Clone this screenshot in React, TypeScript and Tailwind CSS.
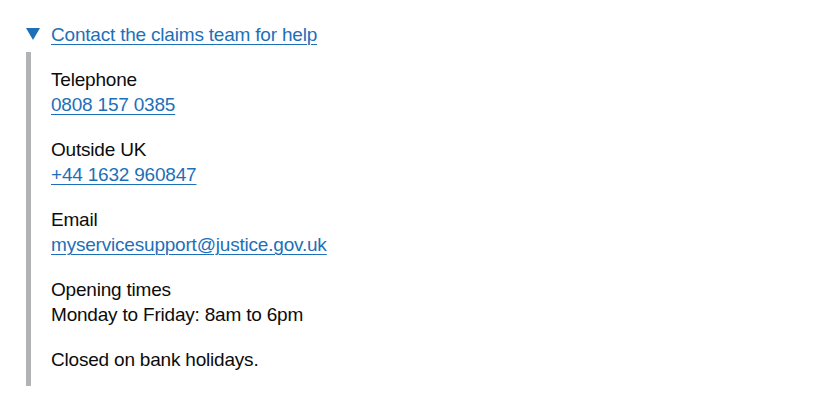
const contactItems: { label: string; value: string; href?: string }[] = [
  { label: "Telephone", value: "0808 157 0385", href: "tel:08081570385" },
  { label: "Outside UK", value: "+44 1632 960847", href: "tel:+441632960847" },
  {
    label: "Email",
    value: "myservicesupport@justice.gov.uk",
    href: "mailto:myservicesupport@justice.gov.uk",
  },
  { label: "Opening times", value: "Monday to Friday: 8am to 6pm" },
];

const linkClass =
  "text-[#1d70b8] underline decoration-1 underline-offset-[3px] hover:text-[#003078]";

export default function App() {
  return (
    <div className="min-h-screen bg-white pl-[26px] pt-[22px] text-[19px] leading-[25px] tracking-[-0.2px] text-[#0b0c0c] font-['Liberation_Sans',Arial,sans-serif]">
      <details open className="group">
        {/* Summary row */}
        <summary className="relative mb-[5px] inline-block cursor-pointer list-none pl-[25px] [&::-webkit-details-marker]:hidden">
          <svg
            className="absolute left-0 top-[6px]"
            width="14"
            height="12"
            viewBox="0 0 14 12"
            aria-hidden="true"
          >
            <polygon points="0,0 14,0 7,12" fill="#1d70b8" />
          </svg>
          <span className={linkClass}>Contact the claims team for help</span>
        </summary>

        {/* Panel */}
        <div className="border-l-[5px] border-[#b1b4b6] pb-[14px] pl-[20px] pr-[15px] pt-[15px]">
          {contactItems.map((item) => (
            <p key={item.label} className="mb-[20px]">
              {item.label}
              <br />
              {item.href ? (
                <a href={item.href} className={linkClass}>
                  {item.value}
                </a>
              ) : (
                item.value
              )}
            </p>
          ))}
          <p>Closed on bank holidays.</p>
        </div>
      </details>
    </div>
  );
}
